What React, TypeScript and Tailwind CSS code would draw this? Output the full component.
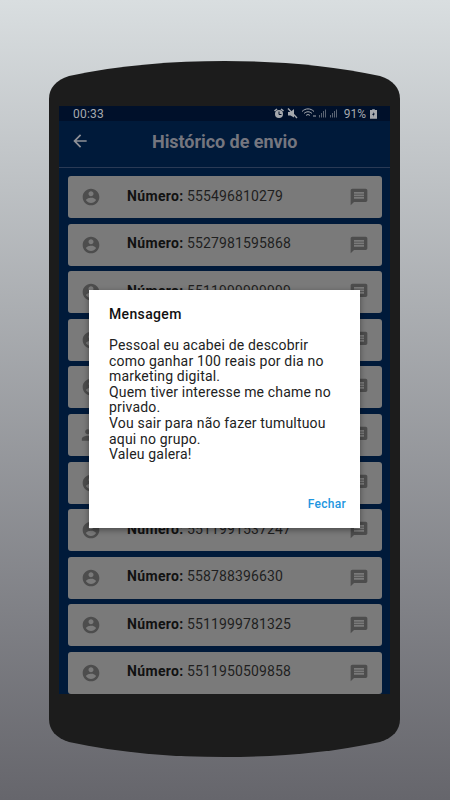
const accountCircle = "M12 2C6.48 2 2 6.48 2 12s4.48 10 10 10 10-4.48 10-10S17.52 2 12 2zm0 3c1.66 0 3 1.34 3 3s-1.34 3-3 3-3-1.34-3-3 1.34-3 3-3zm0 14.2c-2.5 0-4.71-1.28-6-3.22.03-1.99 4-3.08 6-3.08 1.99 0 5.97 1.09 6 3.08-1.29 1.94-3.5 3.22-6 3.22z";
const person = "M16 11c1.66 0 2.99-1.34 2.99-3S17.66 5 16 5s-3 1.34-3 3 1.34 3 3 3zm-8 0c1.66 0 2.99-1.34 2.99-3S9.66 5 8 5 5 6.34 5 8s1.34 3 3 3zm0 2c-2.33 0-7 1.17-7 3.5V19h14v-2.5C15 14.17 10.33 13 8 13zm8 0c-.29 0-.62.02-.97.05 1.16.84 1.97 1.97 1.97 3.45V19h6v-2.5c0-2.33-4.67-3.5-7-3.5z";
const message = "M20 2H4c-1.1 0-1.99.9-1.99 2L2 22l4-4h14c1.1 0 2-.9 2-2V4c0-1.1-.9-2-2-2zm-2 12H6v-2h12v2zm0-3H6V9h12v2zm0-3H6V6h12v2z";

const rows = [
  { n: "555496810279", i: accountCircle },
  { n: "5527981595868", i: accountCircle },
  { n: "5511999999999", i: accountCircle },
  { n: "", i: accountCircle },
  { n: "", i: accountCircle },
  { n: "", i: person },
  { n: "", i: accountCircle },
  { n: "5511991537247", i: accountCircle },
  { n: "558788396630", i: accountCircle },
  { n: "5511999781325", i: accountCircle },
  { n: "5511950509858", i: accountCircle },
];

function Icon({ d, className }: { d: string; className: string }) {
  return (
    <svg viewBox="0 0 24 24" className={className} fill="currentColor">
      <path d={d} fillRule="evenodd" />
    </svg>
  );
}

export default function App() {
  return (
    <div className="w-[450px] h-[800px] overflow-hidden bg-gradient-to-b from-[#d9dee0] to-[#66666c] pl-[49px] pt-[61px] font-['Roboto',sans-serif]">
      <div className="relative w-[351px] h-[696px] px-[10px] pt-[45px]">
        <svg viewBox="0 0 351 696" className="absolute inset-0 w-full h-full text-[#1c1c1c]" fill="currentColor">
          <path d="M0 38 C0 27 7 19 20 15 C70 4 125 0 175.500 0 C226 0 281 4 331 15 C344 19 351 27 351 38 L351 658 C351 669 344 677 331 681 C281 692 226 696 175.500 696 C125 696 70 692 20 681 C7 677 0 669 0 658 Z" />
        </svg>
        <div className="relative w-[331px] h-[588px] overflow-hidden bg-[#001a3a] flex flex-col">
          <div className="h-[15px] shrink-0 bg-[#00102a] flex items-center pl-[14px] pr-[13px] text-[12px] text-[#a6a9ae] leading-none">
            <span className="mr-auto tracking-[0.2px]">00:33</span>
            <svg viewBox="0 0 66 11" className="w-[66px] h-[11px]" fill="#a6a9ae">
              <circle cx="5" cy="6" r="4" />
              <path d="M5 3.500V6.500H7.500" fill="none" stroke="#00102a" strokeWidth="1" />
              <path d="M0 2.500 2.500 0.500 3.500 1.500 1 3.500zM10 2.500 7.500.5 6.500 1.500 9 3.500z" />
              <path d="M14 4h2.500l3.500-3v8.500L16.500 7.500H14z" />
              <path d="M14 .5l9 9.500" stroke="#a6a9ae" strokeWidth="1.300" />
              <path d="M28 3.500c3.500-3.500 8.500-3.500 12 0M30 5.500c2.300-2.300 5.700-2.300 8 0M32 7.500c1.200-1.200 2.800-1.200 4 0" fill="none" stroke="#a6a9ae" strokeWidth="1" />
              <path d="M39 7.500h3v1h-3z" />
              <rect x="45" y="7" width="1" height="2.500" opacity=".55" /><rect x="47" y="5" width="1" height="4.500" opacity=".55" /><rect x="49" y="3" width="1" height="6.500" opacity=".55" /><rect x="51" y="1.500" width="1" height="8" opacity=".55" />
              <rect x="56" y="7" width="1" height="2.500" opacity=".55" /><rect x="58" y="5" width="1" height="4.500" opacity=".55" /><rect x="60" y="3" width="1" height="6.500" opacity=".55" /><rect x="62" y="1.500" width="1" height="8" opacity=".55" />
            </svg>
            <span className="ml-[4px]">91%</span>
            <svg viewBox="0 0 8 11" className="w-[7px] h-[10px] ml-[4px]" fill="#a6a9ae">
              <path d="M2.500 0h3v1H8v10H0V1h2.500z" />
              <path d="M4.500 2.500 2.500 6.500h1.500L3.500 9l2-4H4z" fill="#00102a" />
            </svg>
          </div>
          <div className="h-[47px] shrink-0 flex items-center border-b border-[#2a3a55]">
            <svg viewBox="0 0 24 24" className="w-[20px] h-[20px] ml-[11px] text-[#8f9197] -translate-y-[3px]" fill="currentColor">
              <path d="M20 11H7.830l5.590-5.590L12 4l-8 8 8 8 1.410-1.410L7.830 13H20v-2z" />
            </svg>
            <span className="ml-[62px] -translate-y-[3px] text-[18px] font-bold tracking-[-0.05px] text-[#75767f]">Histórico de envio</span>
          </div>
          <div className="flex flex-col gap-[5.6px] pt-[8px] pl-[9px] pr-[8px]">
            {rows.map((r, idx) => (
              <div key={idx} className="h-[42px] shrink-0 rounded-[3px] bg-[#7a7a7a] flex items-center pl-[13px] pr-[13px] text-[#111]">
                <Icon d={r.i} className="w-[20px] h-[20px] text-[#4d4d4d]" />
                <div className="ml-[26px] flex-1 text-[14px] -translate-y-[1px]">
                  {r.n && (
                    <>
                      <b className="font-bold tracking-[0.35px]">Número:</b>{" "}
                      <span className="text-[#1f1f1f] tracking-[0.13px]">{r.n}</span>
                    </>
                  )}
                </div>
                <Icon d={message} className="w-[20px] h-[20px] text-[#4d4d4d]" />
              </div>
            ))}
          </div>
        </div>
        <div className="absolute left-[40px] top-[229px] w-[271px] h-[238px] bg-white shadow-[0_2px_6px_rgba(0,0,0,0.4)] pl-[20px] pr-[10px] pt-[16px] flex flex-col">
          <div className="text-[14px] font-medium text-[#111] leading-[17px] tracking-[0.35px]">Mensagem</div>
          <div className="mt-[15px] text-[14px] leading-[15.6px] text-[#222] tracking-[0.18px]">
            Pessoal eu acabei de descobrir<br />
            como ganhar 100 reais por dia no<br />
            marketing digital.<br />
            Quem tiver interesse me chame no<br />
            privado.<br />
            Vou sair para não fazer tumultuou<br />
            aqui no grupo.<br />
            Valeu galera!
          </div>
          <div className="mt-auto mb-[15px] pr-[4px] text-right text-[12px] font-medium tracking-[0.3px] text-[#2196e0]">Fechar</div>
        </div>
      </div>
    </div>
  );
}
